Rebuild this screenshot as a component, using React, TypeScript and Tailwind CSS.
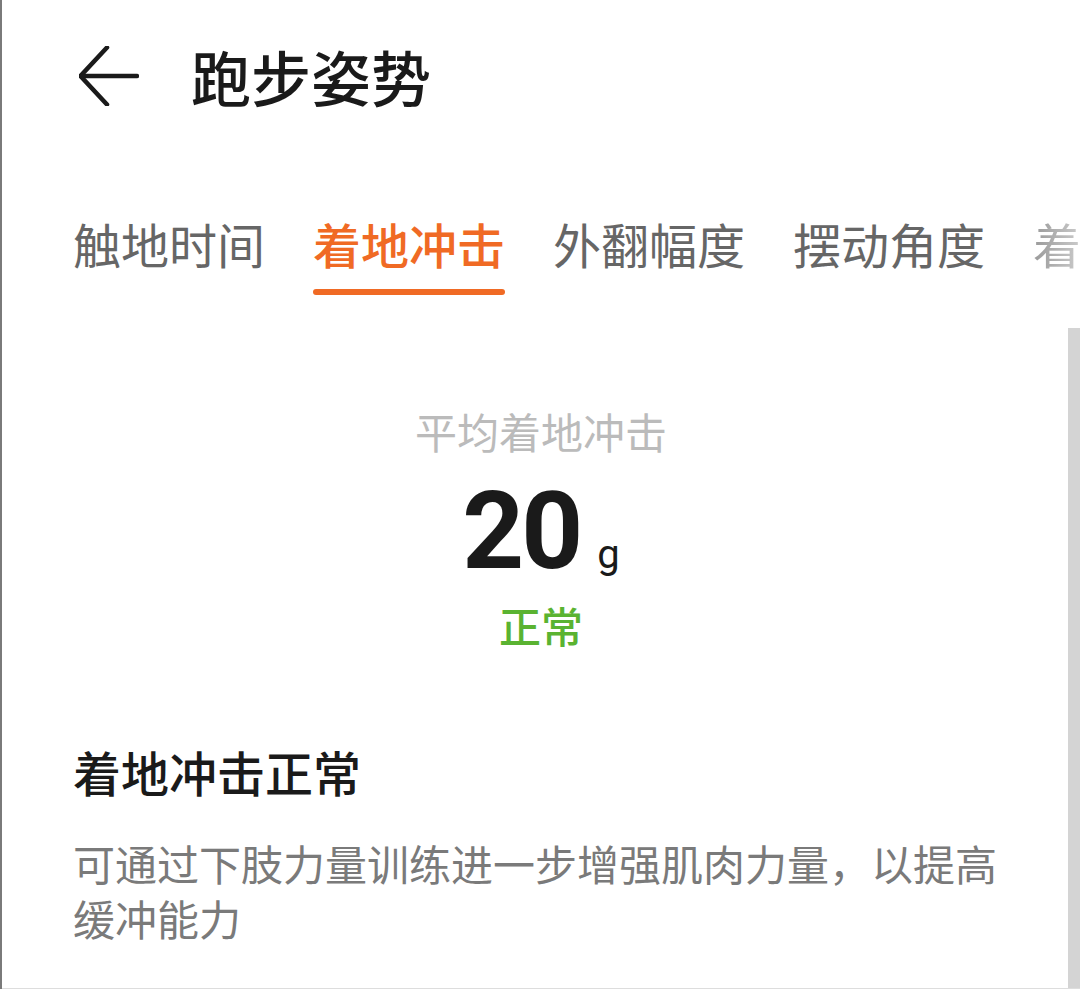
const cjk = { fontFamily: '"Noto Sans CJK SC", "Noto Sans", sans-serif' };

const tabs = ["触地时间", "着地冲击", "外翻幅度", "摆动角度"];

function BackArrow() {
  return (
    <svg width="60" height="60" viewBox="0 0 60 60" fill="none" stroke="#1a1a1a" strokeWidth="4.5" strokeLinecap="round" strokeLinejoin="round">
      <path d="M28 1.5 L1.5 30 L28 58.5" />
      <path d="M2 30 H58" />
    </svg>
  );
}

export default function App() {
  return (
    <div className="w-[1080px] h-[989px] overflow-hidden bg-white border-l-2 border-[#7a7a7a] flex flex-col" style={cjk}>
      {/* header */}
      <header className="h-[152px] shrink-0 flex items-center pl-[77px]">
        <BackArrow />
        <h1 className="ml-[52px] text-[60px] leading-none font-medium text-[#1a1a1a]">跑步姿势</h1>
      </header>

      {/* tabs */}
      <nav className="h-[176px] shrink-0 pt-[67px] pl-[71px] flex gap-[48px] whitespace-nowrap overflow-hidden">
        {tabs.map((t, i) => (
          <div key={t} className="flex flex-col shrink-0">
            <span className={`text-[48px] leading-none ${i === 1 ? "text-[#f06a24] font-medium" : "text-[#666666]"}`}>{t}</span>
            {i === 1 && <span className="mt-[22px] h-[6px] rounded-full bg-[#f06a24]" />}
          </div>
        ))}
        <span className="shrink-0 text-[48px] leading-none bg-linear-to-r from-[#9a9a9a] to-white bg-clip-text text-transparent">着地</span>
      </nav>

      {/* content */}
      <div className="flex-1 flex border-b border-[#dddddd]">
        <main className="flex-1 flex flex-col">
          <div className="flex flex-col items-center pt-[82px] pl-[12px]">
            <p className="text-[42px] leading-[42px] text-[#bbbbbb]">平均着地冲击</p>
            <div className="mt-[25px] flex items-baseline" style={{ fontFamily: 'Roboto, "Noto Sans", sans-serif' }}>
              <span className="text-[108px] leading-none font-bold tracking-[-3px] text-[#1a1a1a]">20</span>
              <span className="ml-[17px] text-[40px] leading-none text-[#1a1a1a]">g</span>
            </div>
            <p className="mt-[19px] text-[42px] leading-[42px] font-medium text-[#5ab331]">正常</p>
          </div>

          <section className="pl-[71px] pr-[70px]">
            <h2 className="mt-[101px] text-[48px] leading-[48px] font-medium text-[#1a1a1a]">着地冲击正常</h2>
            <p className="mt-[40px] text-[42px] leading-[55px] text-[#7a7a7a]">
              可通过下肢力量训练进一步增强肌肉力量，以提高缓冲能力
            </p>
          </section>
        </main>
        <div className="w-[12px] shrink-0 bg-[#d4d4d4]" />
      </div>
    </div>
  );
}
